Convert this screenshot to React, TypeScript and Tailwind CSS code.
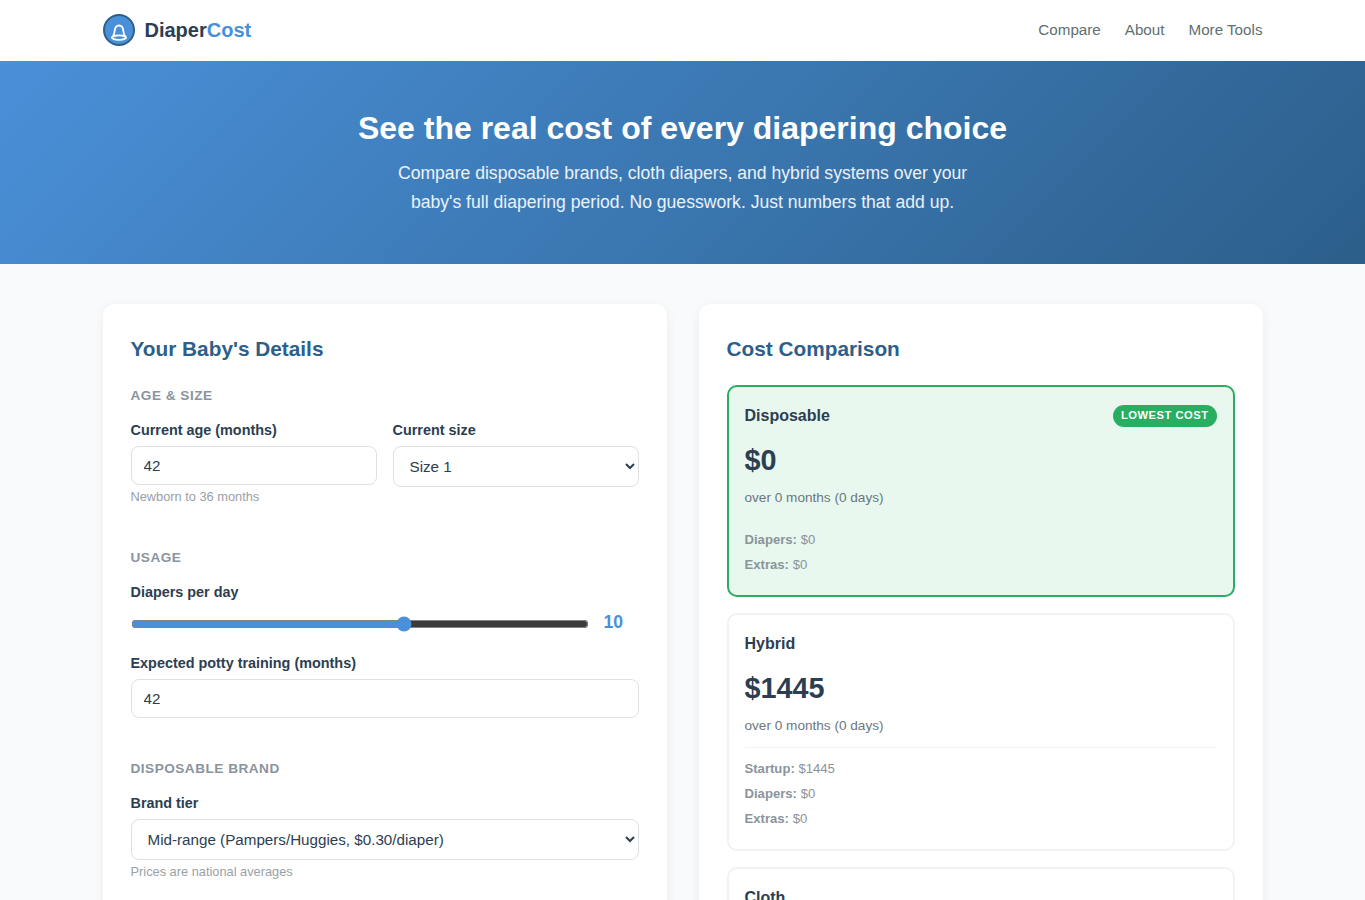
const sectionTitle = 'text-[13.6px] leading-[16px] font-semibold uppercase tracking-[0.5px] text-[#8a949e] mb-[18px]';
const labelClass = 'block text-[14.4px] leading-[17px] font-semibold text-[#2c3e50] mb-[7px]';
const fieldClass =
  'block w-full rounded-lg border border-[#dde1e6] bg-white text-[15.2px] text-[#2c3e50] outline-none';
const hintClass = 'mt-1 text-[12.8px] leading-[15px] text-[#9aa0a6]';

function Logo() {
  return (
    <svg width="32" height="32" viewBox="0 0 32 32" fill="none" aria-hidden>
      <circle cx="16" cy="16" r="15" fill="#4a90d9" stroke="#2c5f8a" strokeWidth="2" />
      <path
        d="M9.600 22.300c1.700-1.400 1.900-3.200 2-5 .2-3.400 2-5.800 4.400-5.800s4.200 2.400 4.400 5.800c.1 1.800.3 3.600 2 5"
        stroke="#fff"
        strokeWidth="1.800"
        strokeLinejoin="round"
      />
      <ellipse cx="16" cy="23.600" rx="7.100" ry="2.200" stroke="#fff" strokeWidth="1.800" />
    </svg>
  );
}

function CostCard({
  name,
  total,
  rows,
  best,
  divider,
}: {
  name: string;
  total: string;
  rows: [string, string][];
  best?: boolean;
  divider?: boolean;
}) {
  return (
    <div
      className={
        best
          ? 'rounded-[10px] border-2 border-[#27ae60] bg-[#e8f8ef] px-4 pt-[17px] pb-[18px] mb-4'
          : 'rounded-[10px] border-2 border-[#f0f2f5] bg-white px-4 pt-[17px] pb-[18px] mb-4'
      }
    >
      <div className="flex items-center justify-between h-[24px]">
        <span className="text-[16px] font-semibold text-[#2c3e50]">{name}</span>
        {best && (
          <span className="rounded-full bg-[#27ae60] px-2 pt-[3px] pb-[5px] text-[11.2px] leading-[14px] font-bold uppercase tracking-[0.5px] text-white">
            Lowest cost
          </span>
        )}
      </div>
      <div className="mt-[15px] text-[28.8px] leading-[35px] font-bold text-[#2c3e50]">{total}</div>
      <div className="mt-[12px] text-[13.6px] leading-[16px] text-[#6b7780]">over 0 months (0 days)</div>
      <div className={divider ? 'mt-[13px] border-t border-[#f0f2f5] pt-[8px]' : 'mt-[13px] border-t border-transparent pt-[7px]'}>
        {rows.map(([label, value]) => (
          <div key={label} className="py-[4px] text-[13.12px] leading-[17px] text-[#8a949a]">
            <strong className="font-semibold">{label}:</strong> {value}
          </div>
        ))}
      </div>
    </div>
  );
}

export default function App() {
  return (
    <div className="min-h-screen bg-[#f8fafc] font-['Liberation_Sans',Arial,sans-serif] text-[#2c3e50]">
      <header className="bg-white h-[61px]">
        <div className="mx-auto flex h-[60px] max-w-[1160px] items-center justify-between">
          <div className="flex items-center gap-[10px]">
            <Logo />
            <span className="text-[20px] font-bold text-[#2c3e50]">
              Diaper<span className="text-[#4a90d9]">Cost</span>
            </span>
          </div>
          <nav className="flex gap-6 text-[15.2px] text-[#5f6f73]">
            <a>Compare</a>
            <a>About</a>
            <a>More Tools</a>
          </nav>
        </div>
      </header>

      <section className="h-[203px] bg-[linear-gradient(135deg,#4a90d9,#2c5f8a)] pt-[48px] text-center text-white">
        <h1 className="text-[32px] leading-[38px] font-bold">See the real cost of every diapering choice</h1>
        <p className="mx-auto mt-[12px] max-w-[600px] text-[17.6px] leading-[29px] text-white/90">
          Compare disposable brands, cloth diapers, and hybrid systems over your baby's full diapering period. No
          guesswork. Just numbers that add up.
        </p>
      </section>

      <main className="mx-auto grid max-w-[1160px] grid-cols-2 gap-8 pt-10 pb-10">
        <div className="rounded-xl bg-white p-7 shadow-[0_2px_12px_rgba(0,0,0,0.06)]">
          <h2 className="mt-[4px] mb-[27px] text-[20.8px] leading-[25px] font-bold text-[#2c5f8a]">Your Baby's Details</h2>

          <h3 className={sectionTitle}>Age &amp; Size</h3>
          <div className="grid grid-cols-2 gap-4">
            <div>
              <label className={labelClass}>Current age (months)</label>
              <input type="number" defaultValue={42} className={`${fieldClass} h-[39px] px-3`} />
              <p className={hintClass}>Newborn to 36 months</p>
            </div>
            <div>
              <label className={labelClass}>Current size</label>
              <select defaultValue="1" className={`${fieldClass} h-[41px] appearance-auto px-3`}>
                <option value="1">Size 1</option>
                <option value="2">Size 2</option>
              </select>
            </div>
          </div>

          <h3 className={`${sectionTitle} mt-[46px]`}>Usage</h3>
          <label className={labelClass}>Diapers per day</label>
          <div className="flex items-center gap-[15px] h-[31px]">
            <input
              type="range"
              min={4}
              max={14}
              defaultValue={10}
              className="h-[16px] w-[458px] shrink-0 accent-[#4a90d9]"
            />
            <span className="-translate-y-px text-[17.6px] font-bold text-[#4a90d9]">10</span>
          </div>
          <label className={`${labelClass} mt-[16px]`}>Expected potty training (months)</label>
          <input type="number" defaultValue={42} className={`${fieldClass} h-[39px] px-3`} />

          <h3 className={`${sectionTitle} mt-[43px]`}>Disposable Brand</h3>
          <label className={labelClass}>Brand tier</label>
          <select defaultValue="mid" className={`${fieldClass} h-[41px] appearance-auto px-3`}>
            <option value="mid">Mid-range (Pampers/Huggies, $0.30/diaper)</option>
          </select>
          <p className={hintClass}>Prices are national averages</p>
        </div>

        <div className="rounded-xl bg-white p-7 shadow-[0_2px_12px_rgba(0,0,0,0.06)]">
          <h2 className="mt-[4px] mb-[24px] text-[20.8px] leading-[25px] font-bold text-[#2c5f8a]">Cost Comparison</h2>
          <CostCard name="Disposable" total="$0" best rows={[['Diapers', '$0'], ['Extras', '$0']]} />
          <CostCard name="Hybrid" total="$1445" divider rows={[['Startup', '$1445'], ['Diapers', '$0'], ['Extras', '$0']]} />
          <CostCard name="Cloth" total="$0" divider rows={[['Startup', '$0'], ['Extras', '$0']]} />
        </div>
      </main>
    </div>
  );
}
